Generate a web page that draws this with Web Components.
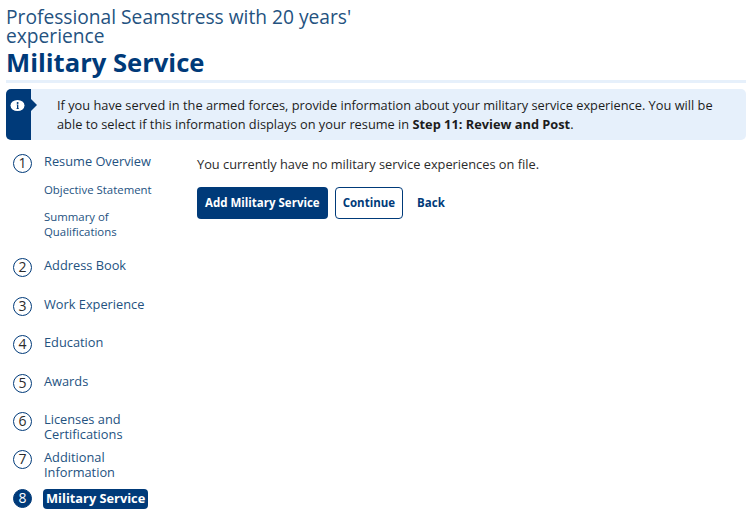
<!DOCTYPE html>
<html>
<head>
<meta charset="utf-8">
<title>Military Service</title>
<style>
  html, body { margin: 0; padding: 0; background: #fff; }
  body { font-family: "Open Sans", sans-serif; color: #222; overflow: hidden; }
</style>
</head>
<body>
<resume-page>
  <page-header slot="header" resume="Professional Seamstress with 20 years' experience" title="Military Service"></page-header>
  <info-banner slot="banner">If you have served in the armed forces, provide information about your military service experience. You will be able to select if this information displays on your resume in <b>Step 11: Review and Post</b>.</info-banner>
  <step-nav slot="nav">
    <step-item num="1" label="Resume Overview">
      <sub-link>Objective Statement</sub-link>
      <sub-link>Summary of Qualifications</sub-link>
    </step-item>
    <step-item num="2" label="Address Book"></step-item>
    <step-item num="3" label="Work Experience"></step-item>
    <step-item num="4" label="Education"></step-item>
    <step-item num="5" label="Awards"></step-item>
    <step-item num="6" label="Licenses and Certifications" style="margin-bottom: -0.5px"></step-item>
    <step-item num="7" label="Additional Information"></step-item>
    <step-item num="8" label="Military Service" active></step-item>
  </step-nav>
  <service-panel slot="main"></service-panel>
</resume-page>

<script>
const NAVY = '#003a79';

class ResumePage extends HTMLElement {
  constructor() {
    super();
    this.attachShadow({ mode: 'open' }).innerHTML = `
      <style>
        :host { display: block; padding: 7px 9px 0 6px; }
        .cols { display: flex; margin-top: 14px; }
        .nav { flex: 0 0 191px; }
        .main { flex: 1; }
      </style>
      <slot name="header"></slot>
      <slot name="banner"></slot>
      <div class="cols">
        <div class="nav"><slot name="nav"></slot></div>
        <div class="main"><slot name="main"></slot></div>
      </div>`;
  }
}

class PageHeader extends HTMLElement {
  constructor() {
    super();
    this.attachShadow({ mode: 'open' }).innerHTML = `
      <style>
        :host { display: block; }
        .resume { font-size: 19.2px; line-height: 19px; color: #24527f; width: 355px; font-weight: 400; margin: 0; }
        .title { font-size: 25.6px; line-height: 33px; font-weight: 700; color: ${NAVY}; margin: 1px 0 0; }
        .rule { height: 3px; background: #e6f0fb; margin-top: 1px; }
      </style>
      <h2 class="resume">${this.getAttribute('resume')}</h2>
      <h1 class="title">${this.getAttribute('title')}</h1>
      <div class="rule"></div>`;
  }
}

class InfoBanner extends HTMLElement {
  constructor() {
    super();
    this.attachShadow({ mode: 'open' }).innerHTML = `
      <style>
        :host { display: flex; margin-top: 6px; background: #e6f0fb; border-radius: 5px; min-height: 51px; font-size: 12.8px; line-height: 19px; color: #1c1c1c; }
        .tab { flex: 0 0 25px; background: ${NAVY}; border-radius: 5px 0 0 5px; position: relative; }
        .tab svg { position: absolute; left: 4px; top: 9px; }
        .tab::after { content: ""; position: absolute; left: 25px; top: 10px; border-left: 6px solid ${NAVY}; border-top: 6px solid transparent; border-bottom: 6px solid transparent; }
        .text { padding: 7px 20px 6px 26px; }
      </style>
      <div class="tab">
        <svg width="15" height="15" viewBox="0 0 15 15">
          <ellipse cx="7.5" cy="7.5" rx="7" ry="5.5" fill="#fff"/>
          <circle cx="7.6" cy="4.9" r="1" fill="${NAVY}"/>
          <path d="M6.7 6.6h1.6v3.6h.6v.7H6.5v-.7h.5V7.3h-.3z" fill="${NAVY}"/>
        </svg>
      </div>
      <div class="text"><slot></slot></div>`;
  }
}

class StepNav extends HTMLElement {
  constructor() {
    super();
    this.attachShadow({ mode: 'open' }).innerHTML = `
      <style>
        :host { display: flex; flex-direction: column; gap: 8.5px; padding-left: 7px; }
      </style>
      <slot></slot>`;
  }
}

class StepItem extends HTMLElement {
  constructor() {
    super();
    this.attachShadow({ mode: 'open' }).innerHTML = `
      <style>
        :host { display: flex; min-height: 30px; font-size: 12.8px; line-height: 15px; color: #24527f; }
        .num { flex: 0 0 auto; box-sizing: border-box; width: 19px; height: 19px; border-radius: 50%; border: 1.5px solid ${NAVY}; color: #2b2b2b; font-size: 14px; line-height: 16px; text-align: center; margin-right: 12px; }
        .body { width: 118px; }
        .label { display: block; }
        :host([active]) .num { background: ${NAVY}; color: #fff; }
        :host([active]) .label { display: inline-block; background: ${NAVY}; color: #fff; font-weight: 700; border-radius: 4px; padding: 2px 3px 3px 3px; margin-left: -1px; white-space: nowrap; }
        .subs { display: flex; flex-direction: column; padding-bottom: 10.6px; }
      </style>
      <div class="num">${this.getAttribute('num')}</div>
      <div class="body">
        <span class="label">${this.getAttribute('label')}</span>
        <div class="subs"><slot></slot></div>
      </div>`;
    if (!this.children.length) this.shadowRoot.querySelector('.subs').style.padding = '0';
  }
}

class SubLink extends HTMLElement {
  constructor() {
    super();
    this.attachShadow({ mode: 'open' }).innerHTML = `
      <style>
        :host { display: block; font-size: 11.4px; line-height: 15px; color: #24527f; margin-top: 12.5px; }
      </style>
      <slot></slot>`;
  }
}

class AppButton extends HTMLElement {
  constructor() {
    super();
    this.attachShadow({ mode: 'open' }).innerHTML = `
      <style>
        :host { display: inline-flex; align-items: center; box-sizing: border-box; height: 32px; padding: 0 8px 2px; border-radius: 4px; font-size: 11.5px; font-weight: 700; color: ${NAVY}; white-space: nowrap; }
        :host([kind="primary"]) { background: ${NAVY}; color: #fff; }
        :host([kind="outline"]) { background: #fff; border: 1px solid ${NAVY}; padding: 0 7px 2px; }
        :host([kind="link"]) { padding: 0 0 2px 7px; }
      </style>
      <slot></slot>`;
  }
}

class ServicePanel extends HTMLElement {
  constructor() {
    super();
    this.attachShadow({ mode: 'open' }).innerHTML = `
      <style>
        :host { display: block; }
        p { margin: 1px 0 14px; font-size: 12.8px; line-height: 18px; color: #2b2b2b; }
        .actions { display: flex; gap: 7px; }
      </style>
      <p>You currently have no military service experiences on file.</p>
      <div class="actions">
        <app-button kind="primary">Add Military Service</app-button>
        <app-button kind="outline">Continue</app-button>
        <app-button kind="link">Back</app-button>
      </div>`;
  }
}

customElements.define('resume-page', ResumePage);
customElements.define('page-header', PageHeader);
customElements.define('info-banner', InfoBanner);
customElements.define('step-nav', StepNav);
customElements.define('step-item', StepItem);
customElements.define('sub-link', SubLink);
customElements.define('app-button', AppButton);
customElements.define('service-panel', ServicePanel);
</script>
</body>
</html>
